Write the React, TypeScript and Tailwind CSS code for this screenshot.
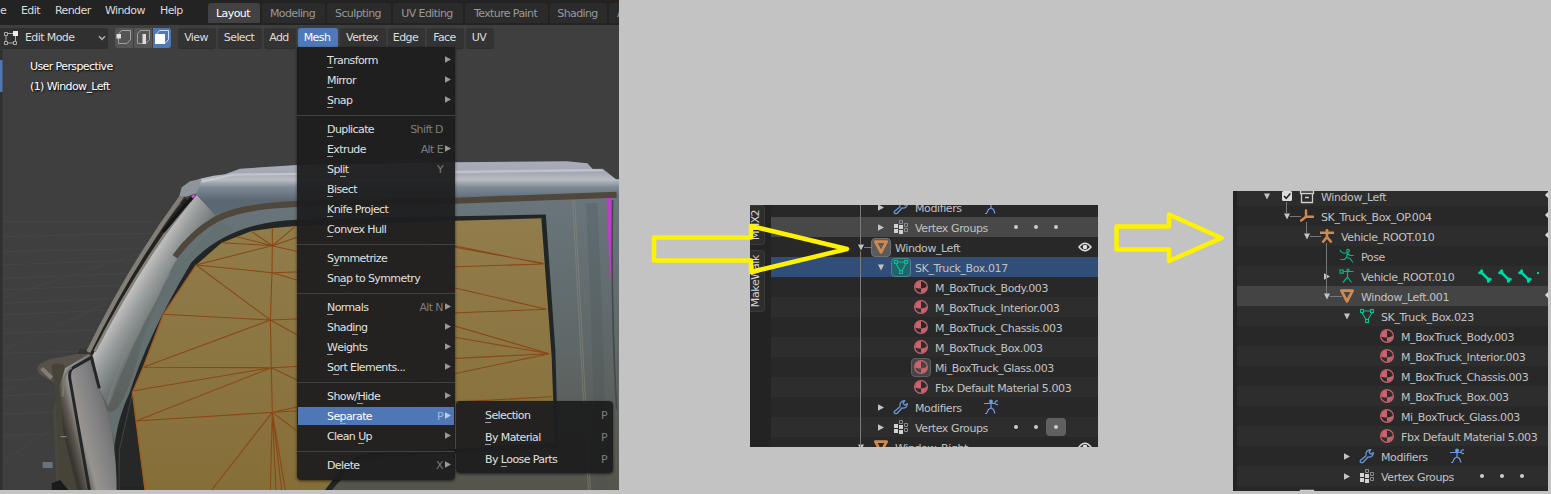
import React from "react";

type IconKind =
  | "wrench" | "runner" | "groups" | "object" | "mesh" | "material" | "collection"
  | "empty" | "armature" | "pose" | "armatureData";

function Icon({ kind }: { kind: IconKind }) {
  const common = { width: 16, height: 16, viewBox: "0 0 16 16", fill: "none" };
  switch (kind) {
    case "material":
      return (
        <svg {...common}>
          <circle cx="8" cy="8" r="6.4" stroke="#c9636d" strokeWidth="1.2" />
          <path d="M8 2A6 6 0 0 0 2 8.6Q5 10 8 9.4ZM8 9.4Q11.5 9.2 14 7.4A6 6 0 0 1 8 14Z" fill="#c9636d" />
        </svg>
      );
    case "mesh":
      return (
        <svg {...common} stroke="#00c38f" strokeWidth="1.1">
          <path d="M4.5 3H11.5M3 4.8L7 11.5M13 4.8L9 11.5" />
          <rect x="1.5" y="1.5" width="3" height="3" />
          <rect x="11.5" y="1.5" width="3" height="3" />
          <rect x="6.5" y="11.5" width="3" height="3" />
        </svg>
      );
    case "object":
      return (
        <svg {...common} stroke="#d08a50" strokeWidth="2.8" strokeLinejoin="round">
          <path d="M2.4 2.6H13.6L8 13.4Z" />
        </svg>
      );
    case "wrench":
      return (
        <svg {...common} stroke="#6a96d8" strokeWidth="1.3" strokeLinejoin="round">
          <path d="M1.6 12.2L7 7.7C6.3 4.5 8.4 1.6 11.9 1.7L10 4.2L11.7 6.2L14.4 4.6C14.4 8 11.9 9.7 9 9L4.2 14.3C2 15.4.3 13.6 1.6 12.2Z" />
        </svg>
      );
    case "runner":
      return (
        <svg {...common} stroke="#6a9ce8" strokeWidth="1.2">
          <path d="M1 4.5H12M8 5V9L5.500 10.5L3.5 14.5H2M8 9L10.5 10.5L12 14.5M15 2Q11.7 1.7 12 4Q12.2 5.8 15 5.5" />
          <circle cx="8" cy="2.4" r="1.3" fill="#6a9ce8" />
        </svg>
      );
    case "groups":
      return (
        <svg {...common}>
          <path d="M1 5h4v4H1ZM1 10h4v4H1ZM6 6h4v4H6ZM6 11h4v4H6Z" fill="#d2d2d2" />
          <path d="M6.5 1.5h3v3h-3ZM11.5 4.5h3v3h-3ZM11.5 9.5h3v3h-3Z" stroke="#8c8c8c" />
        </svg>
      );
    case "collection":
      return (
        <svg {...common} stroke="#d0d0d0" strokeWidth="1.3">
          <path d="M1.5 5.5h13v-3h-13ZM2.5 6v8.500h11V6M6 9.5h4" />
        </svg>
      );
    case "empty":
      return (
        <svg {...common} stroke="#d08a50" strokeWidth="2.4" strokeLinecap="round">
          <path d="M7 2.5V8.8H14M7 8.8L2.2 12.5" />
        </svg>
      );
    case "armature":
      return (
        <svg {...common} stroke="#d08a50" strokeWidth="2.6">
          <path d="M1 4.8H15M8 5V9L3.500 14.5M8 9L12.500 14.5" />
          <circle cx="8" cy="2.6" r="1.2" fill="#d08a50" strokeWidth="1" />
        </svg>
      );
    case "pose":
      return (
        <svg {...common} stroke="#00b588" strokeWidth="1.2">
          <path d="M1 2Q2 4.5 4 5H8.5L11 7.5H14.5M8.5 5L7.5 9.500L5.5 11.5H1.5M7.5 9.5L11 10.5L14 14.5" />
          <circle cx="9" cy="2.8" r="1.4" />
        </svg>
      );
    default:
      return (
        <svg {...common} stroke="#00b588" strokeWidth="1.2">
          <path d="M4.500 3.5H14.5M8.5 4V9L4 14.5M8.5 9L12.500 14.5" />
          <rect x="1" y="2" width="3.2" height="3.2" />
          <circle cx="9" cy="2" r="1" />
        </svg>
      );
  }
}

function Bone() {
  return (
    <svg width="16" height="16" viewBox="0 0 16 16" stroke="#00d6a3" strokeLinecap="round">
      <path d="M4.500 4.5L11.500 11.5" strokeWidth="2.600" />
      <path d="M4.600 2.800V4.700H2.700M11.400 13.200V11.300H13.300" strokeWidth="3" fill="none" />
    </svg>
  );
}

function Eye() {
  return (
    <svg width="14" height="10" viewBox="0 0 14 10" fill="none" stroke="#dedede" strokeWidth="1.4">
      <path d="M1 5Q7-2.5 13 5Q7 12.5 1 5Z" />
      <circle cx="7" cy="5" r="1.6" fill="#dedede" />
    </svg>
  );
}

const TriRight = ({ color = "#c4c4c4" }: { color?: string }) => (
  <svg width="6" height="7" viewBox="0 0 6 7"><path d="M0 .3L6 3.5L0 6.7Z" fill={color} /></svg>
);
const TriDown = () => (
  <svg width="6" height="7" viewBox="0 0 6 7"><path d="M0 .5H6L3 6.5Z" fill="#c4c4c4" /></svg>
);

type Row = {
  x: number;
  label: string;
  icon: IconKind;
  open?: boolean;
  closed?: boolean;
  bg?: string;
  chip?: string;
  check?: boolean;
  extra?: "runner" | "dots" | "dotsActive" | "bones";
  eye?: boolean;
  edge?: boolean;
};

const materials = (x: number, chipGlass: boolean): Row[] => [
  { x, label: "M_BoxTruck_Body.003", icon: "material" },
  { x, label: "M_BoxTruck_Interior.003", icon: "material" },
  { x, label: "M_BoxTruck_Chassis.003", icon: "material" },
  { x, label: "M_BoxTruck_Box.003", icon: "material" },
  { x, label: "Mi_BoxTruck_Glass.003", icon: "material", chip: chipGlass ? "bg-[#454545] border-[#606060]" : undefined },
  { x, label: "Fbx Default Material 5.003", icon: "material" },
];

const middleRows: Row[] = [
  { x: 100, label: "Modifiers", icon: "wrench", closed: true, extra: "runner" },
  { x: 100, label: "Vertex Groups", icon: "groups", closed: true, extra: "dots", bg: "bg-[#484848]" },
  { x: 80, label: "Window_Left", icon: "object", open: true, eye: true, chip: "bg-[#5b5b5b] border-[#707070]" },
  { x: 100, label: "SK_Truck_Box.017", icon: "mesh", open: true, bg: "bg-[#314e78]", chip: "bg-[#24636e] border-[#4b8790]" },
  ...materials(120, true),
  { x: 100, label: "Modifiers", icon: "wrench", closed: true, extra: "runner" },
  { x: 100, label: "Vertex Groups", icon: "groups", closed: true, extra: "dotsActive" },
  { x: 80, label: "Window_Right", icon: "object", open: true, eye: true },
];

const rightRows: Row[] = [
  { x: 40, label: "Window_Left", icon: "collection", open: true, check: true, edge: true },
  { x: 40, label: "SK_Truck_Box_OP.004", icon: "empty", open: true, edge: true },
  { x: 60, label: "Vehicle_ROOT.010", icon: "armature", open: true, edge: true },
  { x: 80, label: "Pose", icon: "pose" },
  { x: 80, label: "Vehicle_ROOT.010", icon: "armatureData", closed: true, extra: "bones" },
  { x: 80, label: "Window_Left.001", icon: "object", open: true, bg: "bg-[#444444]", edge: true },
  { x: 100, label: "SK_Truck_Box.023", icon: "mesh", open: true },
  ...materials(120, false),
  { x: 100, label: "Modifiers", icon: "wrench", closed: true, extra: "runner" },
  { x: 100, label: "Vertex Groups", icon: "groups", closed: true, extra: "dots" },
  { x: 40, label: "", icon: "collection", check: true },
];

function Dots({ active }: { active: boolean }) {
  return (
    <span className="ml-[18px] flex">
      {[0, 1, 2].map((i) => (
        <span
          key={i}
          className={`flex h-[18px] w-5 items-center justify-center rounded-[4px] ${active && i === 2 ? "bg-[#606060]" : ""}`}
        >
          <i className="mb-px size-[4px] rounded-full bg-[#cccccc]" />
        </span>
      ))}
    </span>
  );
}

function TreeRow({ row, light }: { row: Row; light: boolean }) {
  const stripe = light ? "bg-[#2d2d2d]" : "bg-[#282828]";
  return (
    <div
      className={`flex h-5 shrink-0 items-center overflow-hidden tracking-[-0.4px] ${row.bg ?? stripe}`}
      style={{ paddingLeft: row.check ? row.x - 20 : row.x }}
    >
      <span className="flex w-5 shrink-0 justify-center">
        {row.open && <TriDown />}
        {row.closed && <TriRight />}
      </span>
      {row.check && (
        <span className="flex w-5 shrink-0 justify-center">
          <svg width="10" height="10" viewBox="0 0 10 10">
            <rect width="10" height="10" rx="1.5" fill="#dcdcdc" />
            <path d="M2 5L4.2 7.4L8.3 2.4" stroke="#222" strokeWidth="1.6" fill="none" />
          </svg>
        </span>
      )}
      <span className={`flex h-[19px] w-5 shrink-0 items-center justify-center rounded-[4px] border ${row.chip ?? "border-transparent"}`}>
        <Icon kind={row.icon} />
      </span>
      <span className="ml-[4px] pt-[4px] leading-[16px] whitespace-nowrap text-[#c2c2c2]">{row.label}</span>
      {row.extra === "runner" && <span className="ml-[21px]"><Icon kind="runner" /></span>}
      {(row.extra === "dots" || row.extra === "dotsActive") && <Dots active={row.extra === "dotsActive"} />}
      {row.extra === "bones" && (
        <span className="ml-[23px] flex items-center gap-[4px]">
          <Bone /><Bone /><Bone /><i className="mb-[6px] size-[2px] bg-[#00d6a3]" />
        </span>
      )}
      {row.eye && <span className="mr-[6px] ml-auto pb-px"><Eye /></span>}
      {row.edge && (
        <svg className="mb-[2px] ml-auto" width="3" height="6" viewBox="0 0 3 6"><path d="M3 0L0 3L3 6Z" fill="#ddd" /></svg>
      )}
    </div>
  );
}

function TruckScene() {
  return (
    <svg className="absolute inset-0" width="619" height="490" viewBox="0 0 619 490">
      <defs>
        <linearGradient id="roof" x1="0" y1="40" x2="0" y2="150" gradientUnits="userSpaceOnUse">
          <stop offset="0" stopColor="#a8acb8" />
          <stop offset=".25" stopColor="#a3a8b5" />
          <stop offset=".45" stopColor="#babcc2" />
          <stop offset=".65" stopColor="#7f8a96" />
          <stop offset="1" stopColor="#5b6872" />
        </linearGradient>
        <linearGradient id="pillar" x1="380" y1="350" x2="510" y2="430" gradientUnits="userSpaceOnUse">
          <stop offset="0" stopColor="#a5a4a3" />
          <stop offset=".25" stopColor="#c9c8c6" />
          <stop offset=".6" stopColor="#979b9b" />
          <stop offset="1" stopColor="#6b7474" />
        </linearGradient>
        <linearGradient id="side" x1="0" y1="150" x2="0" y2="1020" gradientUnits="userSpaceOnUse">
          <stop offset="0" stopColor="#69757b" />
          <stop offset=".5" stopColor="#5f6868" />
          <stop offset="1" stopColor="#55544b" />
        </linearGradient>
        <linearGradient id="glass" x1="0" y1="200" x2="0" y2="1020" gradientUnits="userSpaceOnUse">
          <stop offset="0" stopColor="#917d4b" />
          <stop offset="1" stopColor="#866e38" />
        </linearGradient>
        <linearGradient id="mirror" x1="190" y1="830" x2="340" y2="790" gradientUnits="userSpaceOnUse">
          <stop offset="0" stopColor="#38362f" />
          <stop offset=".15" stopColor="#5d5850" />
          <stop offset=".32" stopColor="#98948f" />
          <stop offset=".7" stopColor="#7f7f82" />
          <stop offset="1" stopColor="#6b6965" />
        </linearGradient>
      </defs>
      <rect width="619" height="490" fill="#3f3f3f" />
      <g transform="translate(0 150) scale(.33333)" fill="none">
        <g stroke="#494949" strokeWidth="2">
          <path d="M0 215H470M0 260L450 250M0 305L430 296M0 345L410 330M0 385L400 370M0 420L370 405M0 460L350 445M0 495L330 480M0 550L300 540M0 610L270 603M0 690L160 686M0 738L180 730M0 792L160 787M0 857L150 852" />
          <path d="M0 445L420 310M0 605L320 460M0 730L120 670M0 940L155 838" />
        </g>
        <path d="M275 620L310 540L400 390L540 160L900 120L1857 100V1020H340L300 720Z" fill="url(#side)" />
        <path d="M600 86L640 77L675 73L720 56L890 45L1365 37L1700 34L1762 40L1778 57L1812 59L1848 88L1857 88V136L1365 150L890 156L700 180Q660 190 643 195L590 135L545 115Z" fill="url(#roof)" />
        <path d="M605 95L700 74L1365 66L1810 60" stroke="#d2d3d8" strokeWidth="7" opacity=".6" />
        <path d="M590 135L645 195Q545 270 475 440Q390 590 325 770L300 720L275 620L285 600Q360 420 590 135Z" fill="url(#pillar)" />
        <path d="M660 215Q480 380 420 600T318 780L345 880Q370 760 440 610T600 325L700 235Z" fill="#646f70" />
        <path d="M510 370Q370 590 322 760" stroke="#85877f" strokeWidth="5" opacity=".5" />
        <path d="M272 612Q405 350 560 148" stroke="#25231f" strokeWidth="14" />
        <path d="M265 606Q390 350 548 135" stroke="#827e76" strokeWidth="13" />
        <path d="M284 604Q415 350 572 145" stroke="#858079" strokeWidth="8" />
        <path d="M538 138L545 112L570 94L605 86L590 128L560 140Z" fill="#8f939b" />
        <path d="M490 245L575 143" stroke="#151515" strokeWidth="10" />
        <path d="M576 142L584 135" stroke="#d648d6" strokeWidth="8" />
        <path d="M525 320Q580 245 650 207T890 162L1365 152L1850 134" stroke="#50473c" strokeWidth="18" />
        <path d="M352 1020Q335 860 395 735Q450 560 580 343Q690 225 890 217L1365 207L1630 202L1658 600L1666 885L1365 902L1120 915L1060 935L985 1020Z" fill="#262727" stroke="#222525" strokeWidth="16" />
        <path d="M435 1020L397 728L430 650L490 493L588 345L665 278L755 243L820 234L890 228L1365 212L1624 205L1655 620L1664 878L1365 897L1090 910L1040 935L975 1020Z" fill="url(#glass)" />
        <path d="M357 1020L358 900L396 735" stroke="#41423e" strokeWidth="3" />
        <path
          d="M817 235V287L816 368L811 510L814 653L817 787L811 1020M817 287L885 230M817 287L755 245M817 287L710 260M817 287L665 278M817 287L588 345L816 368L1630 342L892 190M817 287L892 262M817 287L1640 478L811 510L588 345M816 368L1648 611L814 653L430 652L811 510L490 493M811 510L892 555M814 653L398 723M814 653L408 813L817 787L1655 740M817 787L1648 611M814 653L892 690M817 787L635 1020M817 787L960 895M817 787L828 1020M817 787L845 1020M817 787L856 1020M1365 292L1630 340M1365 562L1648 611"
          stroke="#8a4815"
          strokeWidth="3.2"
        />
        <path d="M588 345L490 493L430 650L397 728L435 1020" stroke="#9c5b24" strokeWidth="4" />
        <path d="M1718 150L1765 1020M1724 150L1771 1020" stroke="#918c7c" strokeWidth="3" opacity=".5" />
        <path d="M1775 160L1790 500L1805 1020" stroke="#424d50" strokeWidth="34" opacity=".2" />
        <path d="M1820 144H1835L1833 165L1838 470L1826 300Z" fill="#ba3fc4" />
        <path d="M1838 150Q1832 470 1850 780" stroke="#46494c" strokeWidth="5" />
        <path d="M112 660Q110 640 150 628L240 610L270 612L190 660L160 697L118 672Z" fill="#56524b" />
        <path d="M125 655L155 684" stroke="#a29c91" strokeWidth="12" opacity=".6" />
        <path d="M232 612L240 596H255L265 612Z" fill="#37342f" />
        <path d="M175 740Q158 760 160 800L170 1020H215L180 730Z" fill="#4a4741" />
        <path d="M154 645L170 640L194 645L190 720L240 1020H180L165 720Z" fill="#474339" />
        <path d="M178 710L195 655L265 613L280 622L300 720Q350 850 350 1020H232L190 850Z" fill="url(#mirror)" />
        <path d="M268 1020L210 690Q205 660 220 653L274 622L298 715" stroke="#24272a" strokeWidth="9" />
        <path d="M188 740L192 690Q200 660 215 652" stroke="#7b7670" strokeWidth="6" />
        <path d="M128 936H158V954H128Z" fill="#68727a" />
        <path d="M155 1000L180 990L205 1020H155Z" fill="#191a1c" />
        <path d="M182 860H200" stroke="#8f8b96" strokeWidth="3" />
      </g>
      <rect y="50" width="2.5" height="440" fill="#303030" />
      <rect y="60" width="2.5" height="32" fill="#4f78b8" />
    </svg>
  );
}

const menu: (null | { t: string; u?: number; k?: string; sub?: boolean })[] = [
  { t: "Transform", u: 0, sub: true },
  { t: "Mirror", u: 0, sub: true },
  { t: "Snap", u: 0, sub: true },
  null,
  { t: "Duplicate", u: 0, k: "Shift D" },
  { t: "Extrude", u: 0, k: "Alt E", sub: true },
  { t: "Split", u: 2, k: "Y" },
  { t: "Bisect", u: 0 },
  { t: "Knife Project", u: 0 },
  { t: "Convex Hull", u: 0 },
  null,
  { t: "Symmetrize", u: 1 },
  { t: "Snap to Symmetry", u: 2 },
  null,
  { t: "Normals", u: 0, k: "Alt N", sub: true },
  { t: "Shading", u: 4, sub: true },
  { t: "Weights", u: 0, sub: true },
  { t: "Sort Elements...", u: 1, sub: true },
  null,
  { t: "Show/Hide", u: 5, sub: true },
  { t: "Separate", u: 2, k: "P", sub: true },
  { t: "Clean Up", u: 6, sub: true },
  null,
  { t: "Delete", k: "X", sub: true },
];

function Mnemonic({ t, u }: { t: string; u?: number }) {
  if (u === undefined) return <span className="pt-[2px]">{t}</span>;
  return (
    <span className="pt-[2px] whitespace-pre">
      {t.slice(0, u)}
      <span className="relative after:absolute after:bottom-[-1px] after:left-0 after:h-px after:w-[6px] after:bg-[#a0a0a0]">{t[u]}</span>
      {t.slice(u + 1)}
    </span>
  );
}

function MeshMenu() {
  return (
    <div className="absolute top-[47px] left-[297px] w-[158px] rounded-b-[4px] bg-[#1e1e1f]/95 pt-[3px] pb-[5px] text-[#e0e0e0] shadow-[0_1px_3px_rgba(0,0,0,0.6)]">
      {menu.map((m, i) =>
        m ? (
          <div key={i} className="flex h-5 items-center px-px">
            <div className={`flex h-[18px] flex-1 items-center pr-[3px] pl-[29px] ${m.t === "Separate" ? "bg-[#4f77b5] text-white" : ""}`}>
              <Mnemonic t={m.t} u={m.u} />
              <span className={`mr-[2px] ml-auto pt-[2px] ${m.t === "Separate" ? "text-[#a3b8da]" : "text-[#7d7d7d]"}`}>{m.k}</span>
              <span className="mb-px w-[6px]">{m.sub && <TriRight color={m.t === "Separate" ? "#c0cde2" : "#999999"} />}</span>
            </div>
          </div>
        ) : (
          <div key={i} className="flex h-[9px] items-center pt-px"><div className="h-px w-full bg-[#414141]" /></div>
        ),
      )}
    </div>
  );
}

function SubMenu() {
  return (
    <div className="absolute top-[401px] left-[456px] w-[157px] rounded-[4px] bg-[#1e1e1f]/95 py-[3px] text-[#e0e0e0] shadow-[0_1px_3px_rgba(0,0,0,0.6)]">
      {[{ t: "Selection", u: 0 }, { t: "By Material", u: 0 }, { t: "By Loose Parts", u: 3 }].map((m) => (
        <div key={m.t} className="flex h-[22px] items-center justify-between pr-[6px] pl-[29px]">
          <Mnemonic {...m} />
          <span className="pt-[2px] text-[#7d7d7d]">P</span>
        </div>
      ))}
    </div>
  );
}

const tabs = [
  ["Modeling", "w-[63px]"],
  ["Sculpting", "w-[64px]"],
  ["UV Editing", "w-[70px]"],
  ["Texture Paint", "w-[83px]"],
  ["Shading", "w-[57px]"],
];
const headerButtons = [
  ["View", "w-[38px]"],
  ["Select", "w-[44px]"],
  ["Add", "w-[32px]"],
  ["Mesh", "w-[40px]"],
  ["Vertex", "w-[46px]"],
  ["Edge", "w-[37px]"],
  ["Face", "w-[37px]"],
  ["UV", "w-[28px]"],
];

function SelectMode({ mode }: { mode: number }) {
  return (
    <svg width="18" height="18" viewBox="0 0 18 18" fill="none">
      <path d="M3.500 6L6.5 2.5H15.5V11.5L12 15.5H3.500Z" stroke={mode === 2 ? "#cfdcf2" : "#a0a0a0"} />
      {mode === 0 && <rect x="1.5" y="6" width="4.5" height="4.5" fill="#e0e0e0" />}
      {mode === 1 && <rect x="8.5" y="6" width="3.5" height="10" fill="#dcdcdc" />}
      {mode === 2 && <rect x="2" y="6" width="10" height="10" fill="#ffffff" />}
    </svg>
  );
}

function Viewport() {
  return (
    <section className="relative h-[490px] w-[619px] shrink-0 overflow-hidden">
      <TruckScene />
      <div className="relative flex h-[25px] bg-[#232323] text-[#dcdcdc]">
        <nav className="flex w-[208px] shrink-0 pt-[3px] leading-[16px]">
          <span className="w-[21px]">e</span>
          <span className="w-[34px]">Edit</span>
          <span className="w-[50px]">Render</span>
          <span className="w-[55px]">Window</span>
          <span>Help</span>
        </nav>
        <div className="flex gap-[2px] pt-[3px] text-[#999999]">
          <span className="flex h-5 w-[52px] items-center justify-center rounded-t-[3px] bg-[#424242] pt-[2px] pr-[2px] text-white">Layout</span>
          {tabs.map(([t, w]) => (
            <span key={t} className={`flex h-5 items-center justify-center rounded-t-[3px] bg-[#2b2b2b] pt-[2px] pr-[2px] whitespace-nowrap ${w}`}>{t}</span>
          ))}
          <span className="flex h-5 w-[63px] items-center rounded-t-[3px] bg-[#2b2b2b] pt-[2px] pl-[8px]">Animation</span>
        </div>
      </div>
      <div className="relative flex h-[25px] items-center text-[#dddddd]">
        <div className="flex h-5 w-[108px] items-center rounded-r-[3px] bg-[#303030] shadow-[0_1px_1px_rgba(0,0,0,0.3)]">
          <svg width="18" height="18" viewBox="0 0 18 18" fill="none" stroke="#aaa" className="ml-[2px]">
            <path d="M5.5 4.5H11M4 6V12M6 14H11M13.5 7V12" />
            <path d="M2.5 3.5h3v3h-3ZM2.5 12.5h3v3h-3ZM11.5 12.5h3v3h-3Z" />
            <rect x="11.5" y="2.5" width="4" height="4" fill="#eee" stroke="#eee" />
          </svg>
          <span className="ml-[5px] pt-[2px]">Edit Mode</span>
          <svg width="8" height="6" viewBox="0 0 8 6" fill="none" stroke="#aaa" strokeWidth="1.5" className="mr-[2px] ml-auto"><path d="M1 1.2L4 4.3L7 1.2" /></svg>
        </div>
        <div className="ml-[7px] flex h-5 gap-px overflow-hidden rounded-[3px]">
          <span className="w-[18px] bg-[#555555]"><SelectMode mode={0} /></span>
          <span className="w-[18px] bg-[#555555]"><SelectMode mode={1} /></span>
          <span className="w-[18px] bg-[#4f78b8]"><SelectMode mode={2} /></span>
        </div>
        <div className="ml-[7px] flex gap-[2px]">
          {headerButtons.map(([t, w]) => (
            <span
              key={t}
              className={`flex h-5 items-center justify-center rounded-[3px] pt-[2px] pr-[2px] ${w} ${t === "Mesh" ? "bg-[#4f78b8] text-white" : "bg-[#333333] shadow-[0_1px_1px_rgba(0,0,0,0.3)]"}`}
            >
              {t}
            </span>
          ))}
        </div>
      </div>
      <div className="relative mt-[7px] ml-[30px] flex w-[200px] flex-col leading-5 text-white [text-shadow:1px_1px_2px_#000]">
        <span>User Perspective</span>
        <span>(1) Window_Left</span>
      </div>
      <MeshMenu />
      <SubMenu />
    </section>
  );
}

function SideTab({ label, size }: { label: string; size: string }) {
  return (
    <div className={`flex w-[15px] shrink-0 items-center justify-center rounded-r-[4px] border-y border-r border-[#3a3a3a] bg-[#2d2d2d] text-[#d5d5d5] ${size}`}>
      <span className="mr-[2px] rotate-180 whitespace-nowrap [writing-mode:vertical-rl]">{label}</span>
    </div>
  );
}

export default function App() {
  return (
    <main className="relative flex h-[494px] w-[1551px] overflow-hidden bg-[#c3c3c3] font-['DejaVu_Sans',sans-serif] text-[11px] tracking-[-0.6px]">
      <Viewport />
      <section className="relative mt-[205px] ml-[131px] flex h-[242px] w-[348px] shrink-0 overflow-hidden bg-[#282828]">
        <div className="flex w-[21px] shrink-0 flex-col gap-[5px] bg-[#232323]">
          <SideTab label="MHX2" size="h-[40px] pb-px" />
          <SideTab label="MakeWalk" size="h-[62px] tracking-[-0.4px]" />
        </div>
        <div className="-mt-2 flex flex-1 flex-col">
          {middleRows.map((r, i) => <TreeRow key={i} row={r} light={i % 2 === 1} />)}
        </div>
        <svg className="absolute inset-0" width="348" height="242" stroke="#7a7a7a">
          <path d="M110.500 0V39M110.500 46V242M114 42.500H122" />
        </svg>
      </section>
      <section className="relative mt-[191px] ml-[135px] flex h-[300px] w-[315px] shrink-0 overflow-hidden bg-[#282828]">
        <div className="w-[4px] shrink-0 bg-[#232323]" />
        <div className="-mt-[5px] flex flex-1 flex-col">
          {rightRows.map((r, i) => <TreeRow key={i} row={r} light={i % 2 === 0} />)}
        </div>
        <svg className="absolute inset-0" width="315" height="300" fill="none" stroke="#777777">
          <path d="M53.500 11V22M57 25.500H68M73.500 31V42M77 45.500H88M93.500 52V102M97 105.500H109" />
        </svg>
      </section>
      <svg className="pointer-events-none absolute inset-0" width="1551" height="494" fill="none" stroke="#fff200" strokeWidth="4.500" strokeLinejoin="round">
        <path d="M654 237.500H751V226L847 249L751 272V260.500H654Z" />
        <path d="M1116.500 226.500H1169V214.500L1221.500 238L1169 261V249.500H1116.500Z" />
      </svg>
    </main>
  );
}
